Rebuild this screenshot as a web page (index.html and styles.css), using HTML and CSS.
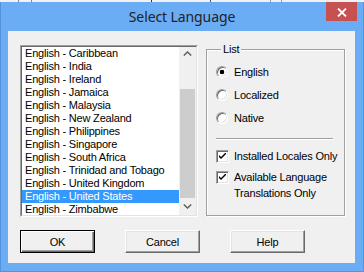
FILE: index.html
```html
<!DOCTYPE html>
<html lang="en">
<head>
  <meta charset="UTF-8">
  <title>Select Language</title>
  <link rel="stylesheet" href="styles.css">
</head>
<body>
<div class="behind"></div>

<div class="window">
  <div class="titlebar">
    <span></span>
    <div class="title">Select Language</div>
    <div class="close">
      <svg width="10" height="9" viewBox="0 0 10 9">
        <path d="M1 0.5 L9 8.5 M9 0.5 L1 8.5" stroke="#fff" stroke-width="1.8" fill="none"/>
      </svg>
    </div>
  </div>

  <div class="client">
    <div class="top-row">
      <div class="listbox">
        <div class="listbox-inner">
          <ul class="items">
            <li>English - Caribbean</li>
            <li>English - India</li>
            <li>English - Ireland</li>
            <li>English - Jamaica</li>
            <li>English - Malaysia</li>
            <li>English - New Zealand</li>
            <li>English - Philippines</li>
            <li>English - Singapore</li>
            <li>English - South Africa</li>
            <li>English - Trinidad and Tobago</li>
            <li>English - United Kingdom</li>
            <li class="selected">English - United States</li>
            <li>English - Zimbabwe</li>
          </ul>
          <div class="scrollbar">
            <div class="arrow up">
              <svg width="9" height="5" viewBox="0 0 9 5"><path d="M0.8 4.5 L4.5 1 L8.2 4.5" stroke="#606060" stroke-width="1.5" fill="none"/></svg>
            </div>
            <div class="track"><div class="thumb"></div></div>
            <div class="arrow down">
              <svg width="9" height="5" viewBox="0 0 9 5"><path d="M0.8 0.5 L4.5 4 L8.2 0.5" stroke="#606060" stroke-width="1.5" fill="none"/></svg>
            </div>
          </div>
        </div>
      </div>

      <fieldset class="group">
        <legend>List</legend>
        <div class="option"><span class="radio checked"></span>English</div>
        <div class="option"><span class="radio"></span>Localized</div>
        <div class="option"><span class="radio"></span>Native</div>
        <div class="separator"></div>
        <div class="check-row first">
          <span class="checkbox"><svg width="7" height="7" viewBox="0 0 7 7"><path d="M0 2 L2 4 L7 -1 L7 1 L2 6 L0 4 Z" fill="#000"/></svg></span>
          <span>Installed Locales Only</span>
        </div>
        <div class="check-row">
          <span class="checkbox"><svg width="7" height="7" viewBox="0 0 7 7"><path d="M0 2 L2 4 L7 -1 L7 1 L2 6 L0 4 Z" fill="#000"/></svg></span>
          <span>Available Language<br>Translations Only</span>
        </div>
      </fieldset>
    </div>

    <div class="buttons">
      <button class="btn default">OK</button>
      <button class="btn">Cancel</button>
      <button class="btn">Help</button>
    </div>
  </div>
</div>
</body>
</html>
```

FILE: styles.css
```css
* {
  margin: 0;
  padding: 0;
  box-sizing: border-box;
}

body {
  width: 364px;
  height: 272px;
  overflow: hidden;
  background: #f0f0f0;
  font-family: "Liberation Sans", Arial, sans-serif;
  font-size: 11px;
  letter-spacing: -0.2px;
  color: #000;
}

/* strip of the window behind */
.behind {
  height: 2px;
  background-color: #f2f2f2;
  background-image:
          linear-gradient(to right, transparent 18px, #8a8a8a 18px, #8a8a8a 19px, transparent 19px),
          linear-gradient(to right, transparent 31px, #8a8a8a 31px, #8a8a8a 32px, transparent 32px),
          linear-gradient(to right, transparent 151px, #333 151px, #333 152px, transparent 152px),
          linear-gradient(to right, transparent 210px, #555 210px, #555 211px, transparent 211px),
          linear-gradient(to right, transparent 270px, #999 270px, #999 271px, transparent 271px),
          linear-gradient(to right, transparent 281px, #999 281px, #999 282px, transparent 282px);
}

.window {
  height: 270px;
  background: #6badf5;
  border: 1px solid #5593de;
  border-top: 0;
  padding: 0 8px 8px 7px;
  display: flex;
  flex-direction: column;
}

/* Title bar */
.titlebar {
  height: 29px;
  margin: 0 -8px 0 -7px;
  display: grid;
  grid-template-columns: 1fr auto 1fr;
}

.title {
  align-self: center;
  font-family: "Noto Sans", "Open Sans", sans-serif;
  font-size: 14px;
  letter-spacing: -0.1px;
  color: #222;
  padding-bottom: 1px;
}

.close {
  justify-self: end;
  width: 31px;
  height: 19px;
  margin-right: 6px;
  background: #c75050;
  display: flex;
  align-items: center;
  justify-content: center;
  padding-top: 1px;
}

.client {
  height: 232px;
  background: #f0f0f0;
  padding: 12px 0 0 12px;
}

.top-row {
  display: flex;
  align-items: flex-start;
  gap: 8px;
}

/* List box */
.listbox {
  width: 178px;
  height: 172px;
  margin-top: 2px;
  border: 1px solid;
  border-color: #a0a0a0 #fff #fff #a0a0a0;
  display: flex;
}

.listbox-inner {
  flex: 1;
  border: 1px solid;
  border-color: #696969 #e3e3e3 #e3e3e3 #696969;
  background: #fff;
  display: flex;
  overflow: hidden;
}

.items {
  flex: 1;
  list-style: none;
  overflow: hidden;
}

.items li {
  height: 13px;
  line-height: 13px;
  padding-left: 3px;
  white-space: nowrap;
}

.items li.selected {
  background: #3399ff;
  color: #fff;
}

.scrollbar {
  width: 17px;
  background: #f0f0f0;
  display: flex;
  flex-direction: column;
}

.arrow {
  height: 17px;
  display: flex;
  justify-content: center;
}

.arrow.up {
  align-items: flex-start;
  padding-top: 4px;
}

.arrow.down {
  align-items: center;
}

.track {
  flex: 1;
}

.thumb {
  margin: 25px 1px 0 1px;
  height: 109px;
  background: #cdcdcd;
}

/* Group box */
.group {
  width: 139px;
  height: 173px;
  border: 1px solid #a0a0a0;
  box-shadow: 1px 1px 0 #fff, inset 1px 1px 0 #fff;
  padding: 4px 0 0 9px;
  min-width: 0;
}

.group legend {
  margin-left: 5px;
  padding: 0 2px;
  line-height: 13px;
  background: #f0f0f0;
}

.option {
  display: flex;
  align-items: center;
  gap: 6px;
  height: 23px;
}

.radio {
  width: 12px;
  height: 12px;
  border-radius: 50%;
  border: 1px solid;
  border-color: #a0a0a0 #fff #fff #a0a0a0;
  box-shadow: inset 1px 1px 0 #696969, inset -1px -1px 0 #e3e3e3;
  background: #fff;
}

.radio.checked {
  background: radial-gradient(circle, #000 0, #000 2px, #fff 2.6px);
}

.separator {
  width: 117px;
  height: 2px;
  margin-top: 9px;
  border-top: 1px solid #a0a0a0;
  border-bottom: 1px solid #fff;
}

.check-row {
  display: flex;
  align-items: flex-start;
  gap: 5px;
  line-height: 16px;
  margin-top: 5px;
}

.check-row.first {
  margin-top: 8px;
  margin-bottom: 5px;
}

.checkbox {
  width: 13px;
  height: 13px;
  margin-top: 2px;
  border: 1px solid;
  border-color: #a0a0a0 #fff #fff #a0a0a0;
  box-shadow: inset 1px 1px 0 #696969, inset -1px -1px 0 #e3e3e3;
  background: #fff;
  display: flex;
  align-items: center;
  justify-content: center;
  flex-shrink: 0;
}

/* Buttons */
.buttons {
  display: flex;
  gap: 30px;
  margin-top: 13px;
}

.btn {
  width: 75px;
  height: 23px;
  font: inherit;
  letter-spacing: inherit;
  color: #000;
  background: #f0f0f0;
  border: 1px solid;
  border-color: #fff #696969 #696969 #fff;
  box-shadow: inset -1px -1px 0 #a0a0a0, inset 1px 1px 0 #e3e3e3;
}

.btn.default {
  border: 1px solid #000;
  box-shadow: inset 1px 1px 0 #fff, inset -1px -1px 0 #696969, inset -2px -2px 0 #a0a0a0;
}
```
